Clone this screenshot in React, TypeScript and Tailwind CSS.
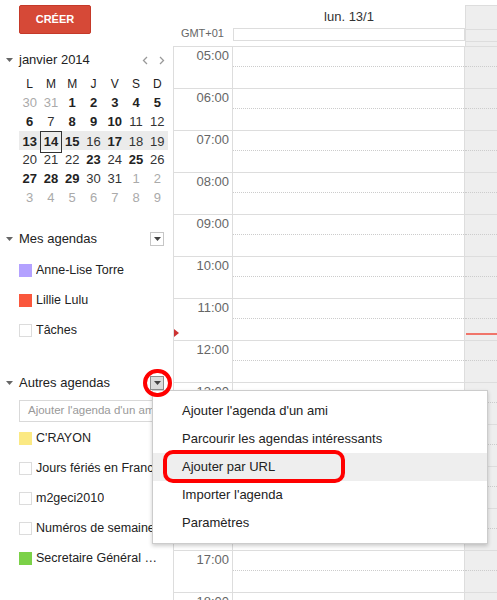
import React from 'react';

type Kind = 'b' | 'n' | 'g';

const weeks: [string, Kind][][] = [
  [['30', 'g'], ['31', 'g'], ['1', 'b'], ['2', 'b'], ['3', 'b'], ['4', 'b'], ['5', 'b']],
  [['6', 'b'], ['7', 'n'], ['8', 'b'], ['9', 'b'], ['10', 'b'], ['11', 'n'], ['12', 'n']],
  [['13', 'b'], ['14', 'b'], ['15', 'b'], ['16', 'n'], ['17', 'b'], ['18', 'n'], ['19', 'n']],
  [['20', 'n'], ['21', 'n'], ['22', 'n'], ['23', 'b'], ['24', 'n'], ['25', 'b'], ['26', 'n']],
  [['27', 'b'], ['28', 'b'], ['29', 'b'], ['30', 'n'], ['31', 'n'], ['1', 'g'], ['2', 'g']],
  [['3', 'g'], ['4', 'g'], ['5', 'g'], ['6', 'g'], ['7', 'g'], ['8', 'g'], ['9', 'g']],
];

const hours = ['05:00', '06:00', '07:00', '08:00', '09:00', '10:00', '11:00', '12:00', '13:00', '14:00', '15:00', '16:00', '17:00', '18:00'];

const Caret = () => (
  <svg width="7" height="4" viewBox="0 0 7 4" className="ml-[6px] mr-[6px]">
    <path d="M0 0 L7 0 L3.5 4 Z" fill="#666" />
  </svg>
);

const DropBox = ({ pressed }: { pressed?: boolean }) => (
  <div
    className={`w-[14px] h-[14px] border flex items-center justify-center ${
      pressed ? 'bg-[#dcdcdc] border-[#8c8c8c]' : 'bg-white border-[#c6c6c6]'
    }`}
  >
    <svg width="7" height="4" viewBox="0 0 7 4">
      <path d="M0 0 L7 0 L3.5 4 Z" fill="#444" />
    </svg>
  </div>
);

const CalItem = ({ color, label }: { color?: string; label: string }) => (
  <div className="h-[30px] flex items-center pl-[19px] pr-[10px]">
    <div
      className={`w-[13px] h-[13px] shrink-0 ${color ? '' : 'border border-[#dcdcdc] bg-white'}`}
      style={color ? { backgroundColor: color } : undefined}
    />
    <span className="ml-[4px] text-[12.5px] text-[#222] whitespace-nowrap overflow-hidden text-ellipsis">{label}</span>
  </div>
);

const Sidebar = () => (
  <div className="w-[173px] shrink-0 pt-[5px]">
    <div className="ml-[19px] w-[72px] h-[29px] rounded-[2px] bg-[#d64937] border border-[#c53929] flex items-center justify-center text-white text-[11px] font-bold">
      CRÉER
    </div>

    {/* mini calendrier */}
    <div className="mt-[16px] h-[20px] flex items-center">
      <Caret />
      <span className="text-[13px] text-[#222]">janvier 2014</span>
      <div className="ml-auto mr-[8px] flex items-center gap-[11px]">
        <svg width="6" height="9" viewBox="0 0 6 9">
          <path d="M5 1 L1.5 4.5 L5 8" stroke="#999" strokeWidth="1.3" fill="none" />
        </svg>
        <svg width="6" height="9" viewBox="0 0 6 9">
          <path d="M1 1 L4.5 4.5 L1 8" stroke="#999" strokeWidth="1.3" fill="none" />
        </svg>
      </div>
    </div>
    <div className="ml-[19px] w-[149px] mt-[4px]">
      <div className="grid grid-cols-7 h-[19px] items-center text-center text-[12px] text-[#222]">
        {['L', 'M', 'M', 'J', 'V', 'S', 'D'].map((d, i) => (
          <span key={i}>{d}</span>
        ))}
      </div>
      {weeks.map((w, wi) => (
        <div key={wi} className={`grid grid-cols-7 h-[19px] text-center text-[13px] ${wi === 2 ? 'bg-[#ebebeb]' : ''}`}>
          {w.map(([d, k], di) => (
            <span
              key={di}
              className={`flex items-center justify-center ${
                k === 'b' ? 'font-bold text-[#222]' : k === 'g' ? 'text-[#aaa]' : 'text-[#333]'
              } ${wi === 2 && di === 1 ? 'border border-[#333]' : ''}`}
            >
              {d}
            </span>
          ))}
        </div>
      ))}
    </div>

    {/* mes agendas */}
    <div className="mt-[22px] h-[20px] flex items-center pr-[9px]">
      <Caret />
      <span className="text-[13px] text-[#222]">Mes agendas</span>
      <div className="ml-auto">
        <DropBox />
      </div>
    </div>
    <div className="mt-[6px]">
      <CalItem color="#b3a1ff" label="Anne-Lise Torre" />
      <CalItem color="#fa573c" label="Lillie Lulu" />
      <CalItem label="Tâches" />
    </div>

    {/* autres agendas */}
    <div className="mt-[28px] h-[20px] flex items-center pr-[9px]">
      <Caret />
      <span className="text-[13px] text-[#222]">Autres agendas</span>
      <div className="ml-auto">
        <DropBox pressed />
      </div>
    </div>
    <div className="mt-[7px] ml-[19px] w-[144px] h-[22px] border border-[#d9d9d9] flex items-center pl-[8px] text-[11.5px] text-[#999] whitespace-nowrap overflow-hidden">
      Ajouter l'agenda d'un ami
    </div>
    <div className="mt-[1px]">
      <CalItem color="#fbe983" label="C'RAYON" />
      <CalItem label="Jours fériés en France" />
      <CalItem label="m2geci2010" />
      <CalItem label="Numéros de semaine" />
      <CalItem color="#7bd148" label="Secretaire Général Jeunesse" />
    </div>
  </div>
);

const Main = () => (
  <div className="flex-1 flex flex-col min-w-0">
    {/* en-tête */}
    <div className="h-[46px] flex shrink-0">
      <div className="w-[60px] flex items-end justify-end pr-[9px] pb-[5px] text-[11px] text-[#666]">GMT+01</div>
      <div className="w-[232px] flex flex-col">
        <div className="h-[28px] pt-[5px] flex items-center justify-center text-[13px] text-[#333]">lun. 13/1</div>
        <div className="h-[13px] border border-[#ddd]" />
      </div>
      <div className="flex-1 flex flex-col mt-[5px] bg-[#eee] border-l border-t border-[#ddd]">
        <div className="h-[23px]" />
        <div className="h-[13px] border-t border-b border-[#ddd]" />
      </div>
    </div>

    {/* grille horaire */}
    <div className="relative flex-1 overflow-hidden border-l border-t border-[#ddd]">
      {hours.map((h) => (
        <div key={h} className="h-[42px] flex border-b border-[#ddd]">
          <div className="w-[59px] shrink-0 text-right pr-[3px] pt-[1px] leading-[15px] text-[13px] text-[#666] border-r border-[#ddd]">
            {h}
          </div>
          <div className="w-[232px] shrink-0 border-r border-[#ddd]">
            <div className="h-[20px] border-b border-dotted border-[#ccc]" />
          </div>
          <div className="flex-1 bg-[#eee]">
            <div className="h-[20px] border-b border-dotted border-[#ccc]" />
          </div>
        </div>
      ))}
      {/* heure actuelle */}
      <div className="absolute left-[292px] right-0 top-[286px] h-[2px] bg-[#f0756a]" />
      <svg className="absolute left-0 top-[282px]" width="5" height="8" viewBox="0 0 5 8">
        <path d="M0 0 L5 4 L0 8 Z" fill="#c33" />
      </svg>
    </div>
  </div>
);

const Menu = () => (
  <div className="absolute left-[152px] top-[390px] w-[336px] py-[6px] bg-white border border-[#ccc] shadow-[0_2px_4px_rgba(0,0,0,0.2)] text-[13px] text-[#222]">
    <div className="h-[28px] flex items-center pl-[29px]">Ajouter l'agenda d'un ami</div>
    <div className="h-[28px] flex items-center pl-[29px]">Parcourir les agendas intéressants</div>
    <div className="h-[28px] flex items-center pl-[29px] bg-[#eee]">Ajouter par URL</div>
    <div className="h-[28px] flex items-center pl-[29px]">Importer l'agenda</div>
    <div className="h-[28px] flex items-center pl-[29px]">Paramètres</div>
  </div>
);

export default function App() {
  return (
    <div className="relative w-[497px] h-[600px] overflow-hidden bg-white flex font-['Liberation_Sans',Arial,sans-serif]">
      <Sidebar />
      <Main />
      <Menu />
      {/* annotations */}
      <div className="absolute left-[143px] top-[369px] w-[29px] h-[28px] rounded-full border-4 border-[#f00]" />
      <div className="absolute left-[163px] top-[450px] w-[182px] h-[33px] rounded-[10px] border-4 border-[#f00]" />
    </div>
  );
}
